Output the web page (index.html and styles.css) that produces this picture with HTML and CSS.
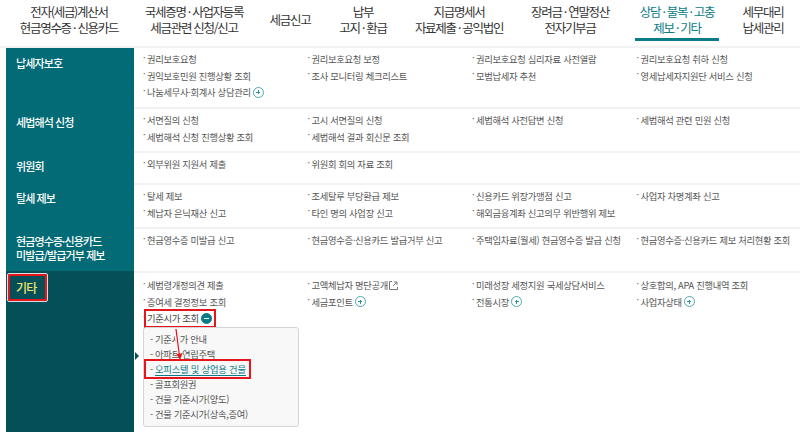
FILE: index.html
```html
<!DOCTYPE html>
<html lang="ko">
<head>
  <meta charset="UTF-8">
  <title>전체메뉴</title>
  <link rel="stylesheet" href="styles.css">
</head>
<body>

  <!-- 상단 메뉴 -->
  <div class="gnb">
    <a class="g1" href="#">전자(세금)계산서<br>현금영수증 · 신용카드</a>
    <a class="g2" href="#">국세증명 · 사업자등록<br>세금관련 신청/신고</a>
    <a class="g3" href="#">세금신고</a>
    <a class="g4" href="#">납부<br>고지 · 환급</a>
    <a class="g5" href="#">지급명세서<br>자료제출 · 공익법인</a>
    <a class="g6" href="#">장려금 · 연말정산<br>전자기부금</a>
    <a class="g7 on" href="#"><span>상담 · 불복 · 고충<br>제보 · 기타</span></a>
    <a class="g8" href="#">세무대리<br>납세관리</a>
  </div>

  <!-- 납세자보호 -->
  <div class="row r1">
    <div class="side">납세자보호</div>
    <ul class="links">
      <li>권리보호요청</li>
      <li>권리보호요청 보정</li>
      <li>권리보호요청 심리자료 사전열람</li>
      <li>권리보호요청 취하 신청</li>
      <li>권익보호민원 진행상황 조회</li>
      <li>조사 모니터링 체크리스트</li>
      <li>모범납세자 추천</li>
      <li>영세납세자지원단 서비스 신청</li>
      <li>나눔세무사·회계사 상담관리<i class="plus"></i></li>
    </ul>
  </div>

  <!-- 세법해석 신청 -->
  <div class="row r2">
    <div class="side">세법해석 신청</div>
    <ul class="links">
      <li>서면질의 신청</li>
      <li>고시 서면질의 신청</li>
      <li>세법해석 사전답변 신청</li>
      <li>세법해석 관련 민원 신청</li>
      <li>세법해석 신청 진행상황 조회</li>
      <li>세법해석 결과 회신문 조회</li>
    </ul>
  </div>

  <!-- 위원회 -->
  <div class="row r3">
    <div class="side">위원회</div>
    <ul class="links">
      <li>외부위원 지원서 제출</li>
      <li>위원회 회의 자료 조회</li>
    </ul>
  </div>

  <!-- 탈세 제보 -->
  <div class="row r4">
    <div class="side">탈세 제보</div>
    <ul class="links">
      <li>탈세 제보</li>
      <li>조세탈루 부당환급 제보</li>
      <li>신용카드 위장가맹점 신고</li>
      <li>사업자 차명계좌 신고</li>
      <li>체납자 은닉재산 신고</li>
      <li>타인 명의 사업장 신고</li>
      <li>해외금융계좌 신고의무 위반행위 제보</li>
    </ul>
  </div>

  <!-- 현금영수증 -->
  <div class="row r5">
    <div class="side">현금영수증·신용카드<br>미발급/발급거부 제보</div>
    <ul class="links">
      <li>현금영수증 미발급 신고</li>
      <li>현금영수증·신용카드 발급거부 신고</li>
      <li>주택임차료(월세) 현금영수증 발급 신청</li>
      <li>현금영수증·신용카드 제보 처리현황 조회</li>
    </ul>
  </div>

  <!-- 기타 -->
  <div class="row r6">
    <div class="side on"><span class="mark-side">기타</span></div>
    <div class="etc">
      <ul class="links">
        <li>세법령개정의견 제출</li>
        <li>고액체납자 명단공개<svg class="ext" viewBox="0 0 9 9"><path d="M3 .5H.5v8h8V6M4 5l4-4M5 1h3v3" fill="none" stroke="#777" stroke-width="1"/></svg></li>
        <li>미래성장 세정지원 국세상담서비스</li>
        <li>상호합의, APA 진행내역 조회</li>
        <li>증여세 결정정보 조회</li>
        <li>세금포인트<i class="plus"></i></li>
        <li>전통시장<i class="plus"></i></li>
        <li>사업자상태<i class="plus"></i></li>
        <li><span class="mark">기준시가 조회<i class="minus"></i></span></li>
      </ul>
      <div class="sub">
        <a href="#">기준시가 안내</a>
        <a href="#">아파트·연립주택</a>
        <a href="#" class="cur"><span>오피스텔 및 상업용 건물</span></a>
        <a href="#">골프회원권</a>
        <a href="#">건물 기준시가(양도)</a>
        <a href="#">건물 기준시가(상속,증여)</a>
        <svg class="arrow" viewBox="0 0 12 36">
          <path d="M2 1l3.4 27" stroke="#f8f8f8" stroke-width="4" fill="none"/>
          <path d="M2 1l3.4 27" stroke="#e8141c" stroke-width="1.2" fill="none"/>
          <path d="M2.4 26l6-.8L6.2 32z" fill="#e8141c"/>
        </svg>
      </div>
    </div>
  </div>

</body>
</html>
```

FILE: styles.css
```css
* { box-sizing: border-box; margin: 0; padding: 0; }
html, body { height: 432px; overflow: hidden; }
body { background: #fff; font-family: "Noto Sans CJK KR", "Noto Sans", sans-serif; color: #555; }
a { color: inherit; text-decoration: none; }
ul { list-style: none; }
i { font-style: normal; }

/* GNB */
.gnb { display: flex; height: 48px; padding-left: 6px; border-bottom: 2px solid #f2f2f2; color: #333; font-size: 12.5px; letter-spacing: -1.3px; line-height: 16px; text-align: center; }
.gnb a { display: flex; align-items: flex-start; justify-content: center; padding-top: 4px; height: 46px; }
.g1 { width: 126px; }
.g2 { width: 124px; }
.g3 { width: 68px; padding-top: 12px !important; }
.g4 { width: 78px; }
.g5 { width: 114px; }
.g6 { width: 108px; }
.g7 { width: 106px; color: #0a7c88; }
.g7 span { display: block; width: 84px; height: 37px; border-bottom: 3px solid #0a7c88; }
.g8 { width: 66px; }

/* Rows */
.row { display: flex; margin-left: 6px; }
.r1 { height: 59px; }
.r2 { height: 44px; }
.r3 { height: 32px; }
.r4 { height: 44px; }
.r5 { height: 44px; }
.r6 { height: 161px; }
.side { width: 128px; flex: none; background: #036b76; color: #fff; font-size: 11px; font-weight: 500; line-height: 14px; letter-spacing: -0.9px; padding: 8px 10px; }
.r5 .side { padding-top: 7px; }
.side.on { background: #054f59; color: #f4e36a; padding: 0; }
.mark-side { display: block; margin: 3px 0 0 2px; width: 39px; height: 27px; padding: 5px 0 0 6px; border: 2px solid #e8141c; outline: 1px solid #d5dee0; border-radius: 1px; font-size: 12px; letter-spacing: -0.8px; }

.links { flex: 1; display: grid; grid-template-columns: repeat(4, 164.5px); grid-auto-rows: 16.5px; padding: 3px 0 0 9px; align-content: start; font-size: 9.3px; letter-spacing: -0.3px; line-height: 16px; }
.row > .links, .etc { border-top: 2px solid #f2f2f2; }
.r1 > .links { border-top: 0; }
.links li { white-space: nowrap; display: flex; align-items: center; }
.links li::before { content: "·"; width: 4px; flex: none; margin-top: -3px; font-size: 9px; }

.plus, .minus { display: inline-block; position: relative; width: 11px; height: 11px; margin-left: 2px; border-radius: 50%; border: 1px solid #4fa9b4; }
.plus::before, .plus::after, .minus::before { content: ""; position: absolute; background: #2f8f9c; left: 2.5px; top: 4px; width: 4px; height: 1px; }
.plus::after { left: 4px; top: 2.5px; width: 1px; height: 4px; }
.minus { background: #0a7c88; border-color: #0a7c88; }
.minus::before { background: #fff; left: 2px; width: 5px; }
.ext { width: 9px; height: 9px; margin-left: 1px; }

.mark { outline: 2px solid #e8141c; outline-offset: 1px; display: flex; align-items: center; color: #444; padding-right: 1px; height: 13px; }

.etc { flex: 1; position: relative; }
.etc .links { padding-top: 4px; }
.sub { position: relative; margin: 0 0 0 9px; width: 156px; height: 100px; padding: 4px 0 0 6px; background: #f8f8f8; border: 1px solid #d5d5d5; border-radius: 3px; font-size: 9.3px; letter-spacing: -0.3px; line-height: 15px; }
.sub::before { content: ""; position: absolute; left: -9px; top: 24px; border: 4px solid transparent; border-left-color: #054f59; border-right: 0; }
.sub a { display: flex; }
.sub a::before { content: "-"; width: 5px; flex: none; }
.sub .cur span { position: relative; color: #0a7c88; border-bottom: 1px solid #0a7c88; height: 14px; line-height: 14px; letter-spacing: -0.2px; }
.sub .cur span::after { content: ""; position: absolute; left: -11px; right: -5px; top: -3px; bottom: -4px; border: 2px solid #e8141c; }
.arrow { position: absolute; left: 30px; top: 0; width: 12px; height: 36px; }
```
